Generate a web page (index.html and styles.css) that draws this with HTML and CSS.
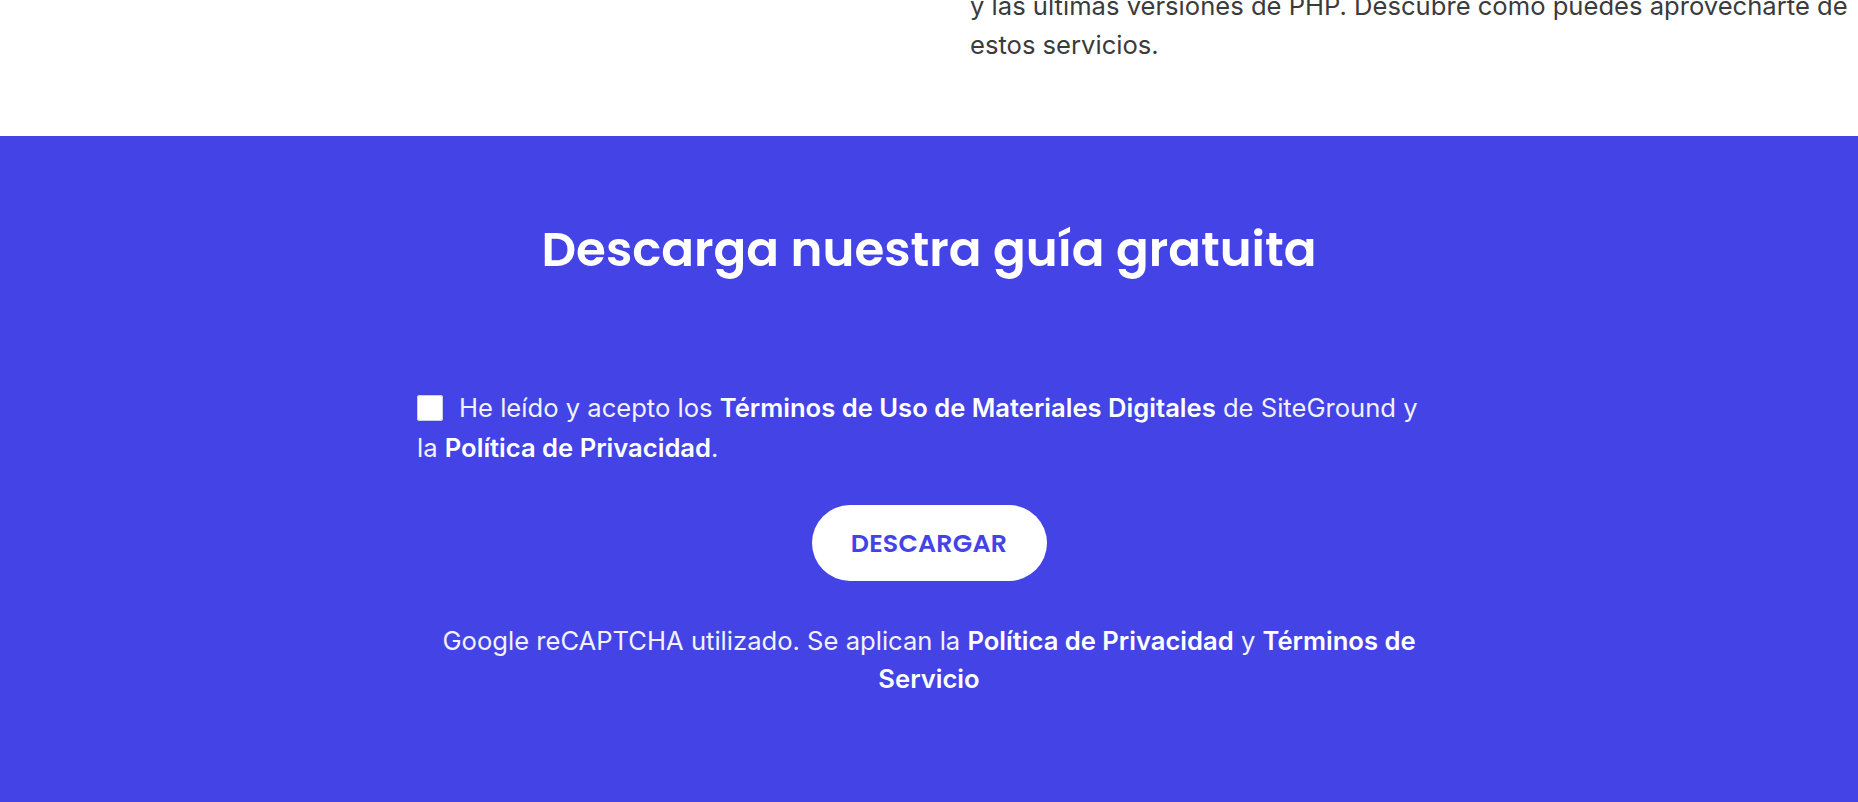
FILE: index.html
```html
<!DOCTYPE html>
<html lang="es">
<head>
<meta charset="utf-8">
<title>Descarga nuestra guía gratuita</title>
<link rel="stylesheet" href="styles.css">
</head>
<body>
<section class="intro">
  <p class="intro-text">y las últimas versiones de PHP. Descubre cómo puedes aprovecharte de<br>estos servicios.</p>
</section>
<section class="download">
  <h2 class="download-title">Descarga nuestra guía gratuita</h2>
  <form class="download-form">
    <label class="consent">
      <span class="checkbox"></span>He leído y acepto los <strong>Términos de Uso de Materiales Digitales</strong> de SiteGround y la <strong>Política de Privacidad</strong>.
    </label>
    <button type="button" class="btn">DESCARGAR</button>
    <p class="recaptcha">Google reCAPTCHA utilizado. Se aplican la <strong>Política de Privacidad</strong> y <strong>Términos de Servicio</strong></p>
  </form>
</section>
</body>
</html>
```

FILE: styles.css
```css
* { box-sizing: border-box; }
html, body { margin: 0; padding: 0; }
body {
  font-family: Inter, "Noto Sans", sans-serif;
  background: #ffffff;
  overflow: hidden;
}
.intro {
  height: 136px;
  overflow: hidden;
  background: #ffffff;
}
.intro-text {
  margin: -14px 0 0 970px;
  font-size: 25.6px;
  line-height: 39px;
  color: #3b3b3b;
  white-space: nowrap;
}
.download {
  background: #4444e6;
  height: 666px;
  display: flex;
  flex-direction: column;
  align-items: center;
  color: #ffffff;
  padding-top: 83px;
}
.download-title {
  margin: 0;
  font-family: Poppins, Inter, sans-serif;
  font-weight: 600;
  font-size: 48.3px;
  line-height: 60px;
}
.download-form {
  width: 1024px;
  margin-top: 109px;
  display: flex;
  flex-direction: column;
  align-items: center;
}
.consent {
  align-self: stretch;
  font-size: 25.6px;
  line-height: 40px;
  color: #f2f2fd;
}
.consent strong, .recaptcha strong { color: #ffffff; font-weight: 600; }
.checkbox {
  display: inline-block;
  width: 26px;
  height: 26px;
  background: #ffffff;
  border-radius: 3px;
  box-shadow: inset 0 0 0 1px #cfcfe0;
  vertical-align: -4px;
  margin-right: 16px;
}
.btn {
  margin-top: 37px;
  width: 235px;
  height: 76px;
  border: 0;
  border-radius: 38px;
  background: #ffffff;
  color: #4444e6;
  font-family: Poppins, Inter, sans-serif;
  font-weight: 600;
  font-size: 25.3px;
  letter-spacing: 0.2px;
}
.recaptcha {
  margin: 41px 0 0;
  align-self: stretch;
  text-align: center;
  font-size: 25.6px;
  line-height: 38px;
  color: #f2f2fd;
}
```
